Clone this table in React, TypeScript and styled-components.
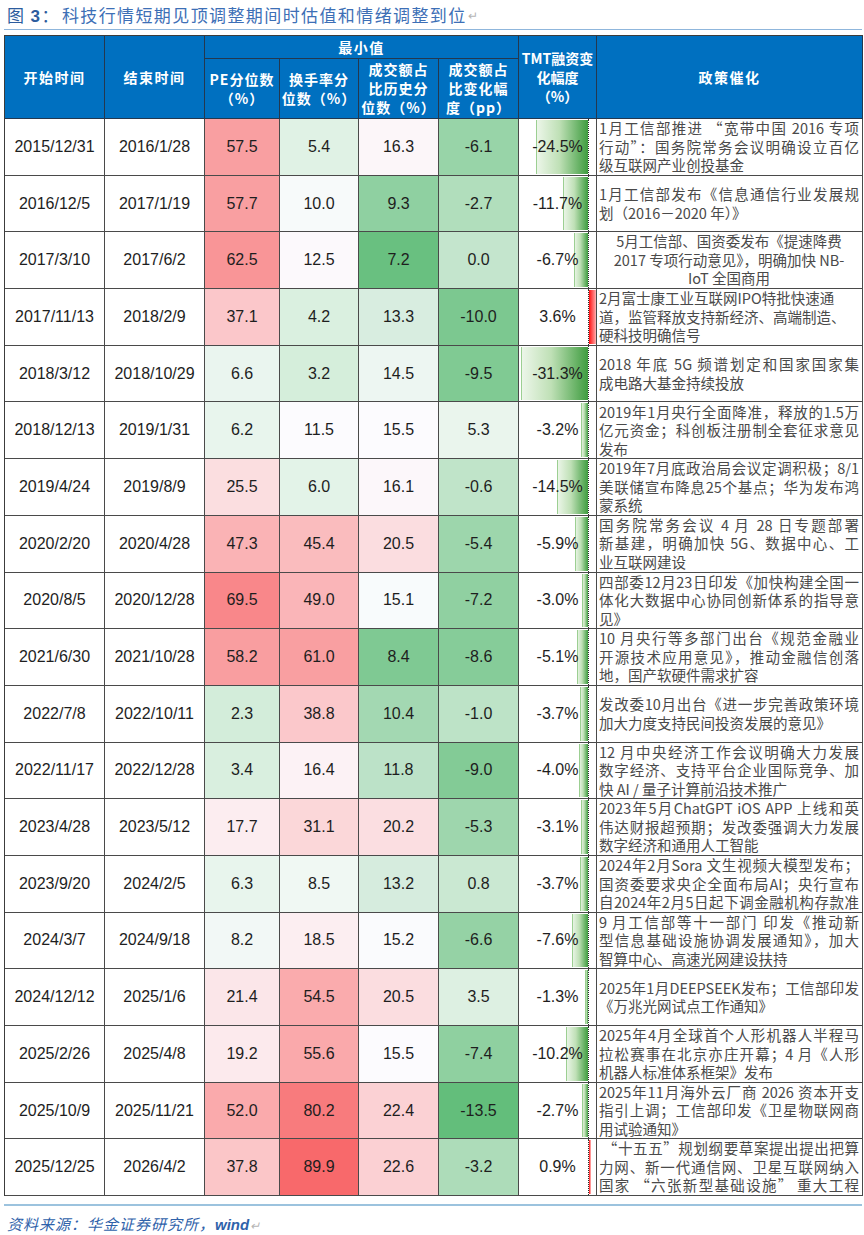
import React, { FC } from 'react';
import styled, { createGlobalStyle } from 'styled-components';

const GlobalStyle = createGlobalStyle`
  html, body {
    margin: 0;
    padding: 0;
    background: #ffffff;
  }
  body {
    font-family: "Liberation Sans", Arial, "Noto Sans CJK SC", sans-serif;
  }
`;

const Page = styled.div`
  width: 864px;
  padding: 0 2px 0 4px;
  box-sizing: border-box;
`;

const Title = styled.div`
  height: 29px;
  display: flex;
  align-items: center;
  padding-left: 3px;
  border-bottom: 1.5px solid #8fb6dc;
  font-family: "Noto Sans CJK SC", sans-serif;
  font-size: 17px;
  letter-spacing: 1.4px;
  color: #3d6fb6;
  white-space: nowrap;
`;

const FigNo = styled.span`
  color: #2c5c9e;
  margin-right: 2px;

  b {
    font-family: "Liberation Sans", Arial, sans-serif;
    font-weight: 700;
  }
`;

const ReturnMark = styled.span`
  color: #b5b5b5;
  font-size: 12px;
  margin-left: 1px;
`;

const Grid = styled.div`
  margin-top: 5px;
  display: grid;
  grid-template-columns: 100px 100px 75px 79px 80px 80px 78px 266px;
  grid-template-rows: 23px 60px;
  grid-auto-rows: 56.7px;
  border-left: 1px solid #3c3c3c;
  border-top: 1px solid #3c3c3c;
  width: max-content;
`;

const HeadCell = styled.div<{ $col: string; $row: string; $spacing?: number }>`
  grid-column: ${(p) => p.$col};
  grid-row: ${(p) => p.$row};
  background: #0070c0;
  color: #ffffff;
  border-right: 1px solid #24384f;
  border-bottom: 1px solid #24384f;
  box-sizing: border-box;
  display: flex;
  align-items: center;
  justify-content: center;
  text-align: center;
  font-family: "Noto Sans CJK SC", sans-serif;
  font-weight: 700;
  font-size: 14px;
  line-height: 19px;
  letter-spacing: ${(p) => p.$spacing ?? 1}px;
  overflow: hidden;
`;

const Cell = styled.div<{ $bg?: string }>`
  background: ${(p) => p.$bg ?? '#ffffff'};
  border-right: 1px solid #4a4a4a;
  border-bottom: 1px solid #4a4a4a;
  box-sizing: border-box;
  display: flex;
  align-items: center;
  justify-content: center;
  font-family: "Liberation Sans", Arial, sans-serif;
  font-size: 16px;
  color: #1e1e1e;
`;

const BarCell = styled(Cell)`
  position: relative;
  overflow: hidden;
`;

const BarValue = styled.span`
  position: relative;
  z-index: 2;
`;

const Bar = styled.div<{ $neg: boolean }>`
  position: absolute;
  top: 1px;
  bottom: 1px;
  z-index: 1;
  background: ${(p) =>
    p.$neg
      ? 'linear-gradient(to right, #eef7eb 0%, #bfe0b6 45%, #3f9d40 100%)'
      : 'linear-gradient(to right, #ff1010 0%, #ff8a8a 70%, #ffd6d6 100%)'};
  box-shadow: ${(p) => (p.$neg ? 'inset 1px 0 0 #9ccf92' : 'none')};
`;

const Axis = styled.div`
  position: absolute;
  top: 0;
  bottom: 0;
  left: 69px;
  width: 0;
  border-left: 1px dotted #2a2a2a;
  z-index: 3;
`;

const PolicyCell = styled(Cell)`
  flex-direction: column;
  align-items: stretch;
  justify-content: center;
  padding: 0 3px 0 2px;
  overflow: hidden;
  font-family: "Noto Sans CJK SC", sans-serif;
  font-size: 14.5px;
  line-height: 18.5px;
  color: #4a4a4a;
`;

const PolicyLine = styled.div<{ $align: 'justify' | 'left' | 'center' }>`
  white-space: nowrap;
  flex-shrink: 0;
  text-align: ${(p) => p.$align};
  text-align-last: ${(p) => p.$align};
`;

const Footer = styled.div`
  margin-top: 8px;
  border-top: 2px solid #9cc3de;
  padding: 7px 0 0 3px;
  font-family: "Noto Sans CJK SC", sans-serif;
  font-style: italic;
  font-size: 15px;
  letter-spacing: 1px;
  color: #2f62aa;

  b {
    font-family: "Liberation Sans", Arial, sans-serif;
    letter-spacing: 0;
  }
`;

type Anchor = [number, string];

const hex = (c: string) => [1, 3, 5].map((i) => parseInt(c.slice(i, i + 2), 16));

const scale = (anchors: Anchor[]) => (v: number) => {
  if (v <= anchors[0][0]) return anchors[0][1];
  for (let i = 1; i < anchors.length; i++) {
    const [v1, c1] = anchors[i];
    if (v <= v1) {
      const [v0, c0] = anchors[i - 1];
      const t = (v - v0) / (v1 - v0);
      const a = hex(c0);
      const b = hex(c1);
      const rgb = a.map((x, k) => Math.round(x + (b[k] - x) * t));
      return `rgb(${rgb.join(',')})`;
    }
  }
  return anchors[anchors.length - 1][1];
};

const peColor = scale([
  [2.3, '#d3edda'],
  [10, '#fcfcff'],
  [85, '#f8696b'],
]);
const turnColor = scale([
  [3.2, '#d5eedb'],
  [11, '#fcfcff'],
  [89.9, '#f8696b'],
]);
const shareColor = scale([
  [7.2, '#69c080'],
  [15.3, '#fcfcff'],
  [22.6, '#fbd0d3'],
]);
const changeColor = scale([
  [-13.5, '#63be7b'],
  [5.3, '#eaf5ed'],
]);

type Align = 'justify' | 'left' | 'center';

interface Row {
  start: string;
  end: string;
  pe: number;
  turn: number;
  share: number;
  change: number;
  tmt: number;
  policy: string[];
  align?: Align;
  fullLast?: boolean;
}

const rows: Row[] = [
  {
    start: '2015/12/31', end: '2016/1/28', pe: 57.5, turn: 5.4, share: 16.3, change: -6.1, tmt: -24.5,
    policy: ['1月工信部推进 “宽带中国 2016 专项', '行动”：国务院常务会议明确设立百亿', '级互联网产业创投基金'],
  },
  {
    start: '2016/12/5', end: '2017/1/19', pe: 57.7, turn: 10.0, share: 9.3, change: -2.7, tmt: -11.7,
    policy: ['1月工信部发布《信息通信行业发展规', '划（2016－2020 年）》'],
  },
  {
    start: '2017/3/10', end: '2017/6/2', pe: 62.5, turn: 12.5, share: 7.2, change: 0.0, tmt: -6.7,
    policy: ['5月工信部、国资委发布《提速降费', '2017 专项行动意见》，明确加快 NB-', 'IoT 全国商用'],
    align: 'center',
  },
  {
    start: '2017/11/13', end: '2018/2/9', pe: 37.1, turn: 4.2, share: 13.3, change: -10.0, tmt: 3.6,
    policy: ['2月富士康工业互联网IPO特批快速通', '道，监管释放支持新经济、高端制造、', '硬科技明确信号'],
    align: 'left',
  },
  {
    start: '2018/3/12', end: '2018/10/29', pe: 6.6, turn: 3.2, share: 14.5, change: -9.5, tmt: -31.3,
    policy: ['2018 年底 5G 频谱划定和国家国家集', '成电路大基金持续投放'],
  },
  {
    start: '2018/12/13', end: '2019/1/31', pe: 6.2, turn: 11.5, share: 15.5, change: 5.3, tmt: -3.2,
    policy: ['2019年1月央行全面降准，释放的1.5万', '亿元资金；科创板注册制全套征求意见', '发布'],
  },
  {
    start: '2019/4/24', end: '2019/8/9', pe: 25.5, turn: 6.0, share: 16.1, change: -0.6, tmt: -14.5,
    policy: ['2019年7月底政治局会议定调积极；8/1', '美联储宣布降息25个基点；华为发布鸿', '蒙系统'],
  },
  {
    start: '2020/2/20', end: '2020/4/28', pe: 47.3, turn: 45.4, share: 20.5, change: -5.4, tmt: -5.9,
    policy: ['国务院常务会议 4 月 28 日专题部署', '新基建，明确加快 5G、数据中心、工', '业互联网建设'],
  },
  {
    start: '2020/8/5', end: '2020/12/28', pe: 69.5, turn: 49.0, share: 15.1, change: -7.2, tmt: -3.0,
    policy: ['四部委12月23日印发《加快构建全国一', '体化大数据中心协同创新体系的指导意', '见》'],
  },
  {
    start: '2021/6/30', end: '2021/10/28', pe: 58.2, turn: 61.0, share: 8.4, change: -8.6, tmt: -5.1,
    policy: ['10 月央行等多部门出台《规范金融业', '开源技术应用意见》，推动金融信创落', '地，国产软硬件需求扩容'],
  },
  {
    start: '2022/7/8', end: '2022/10/11', pe: 2.3, turn: 38.8, share: 10.4, change: -1.0, tmt: -3.7,
    policy: ['发改委10月出台《进一步完善政策环境', '加大力度支持民间投资发展的意见》'],
  },
  {
    start: '2022/11/17', end: '2022/12/28', pe: 3.4, turn: 16.4, share: 11.8, change: -9.0, tmt: -4.0,
    policy: ['12 月中央经济工作会议明确大力发展', '数字经济、支持平台企业国际竞争、加', '快 AI / 量子计算前沿技术推广'],
  },
  {
    start: '2023/4/28', end: '2023/5/12', pe: 17.7, turn: 31.1, share: 20.2, change: -5.3, tmt: -3.1,
    policy: ['2023年5月ChatGPT iOS APP 上线和英', '伟达财报超预期；发改委强调大力发展', '数字经济和通用人工智能'],
  },
  {
    start: '2023/9/20', end: '2024/2/5', pe: 6.3, turn: 8.5, share: 13.2, change: 0.8, tmt: -3.7,
    policy: ['2024年2月Sora 文生视频大模型发布；', '国资委要求央企全面布局AI；央行宣布', '自2024年2月5日起下调金融机构存款准'],
    fullLast: true,
  },
  {
    start: '2024/3/7', end: '2024/9/18', pe: 8.2, turn: 18.5, share: 15.2, change: -6.6, tmt: -7.6,
    policy: ['9 月工信部等十一部门 印发《推动新', '型信息基础设施协调发展通知》，加大', '智算中心、高速光网建设扶持'],
  },
  {
    start: '2024/12/12', end: '2025/1/6', pe: 21.4, turn: 54.5, share: 20.5, change: 3.5, tmt: -1.3,
    policy: ['2025年1月DEEPSEEK发布；工信部印发', '《万兆光网试点工作通知》'],
  },
  {
    start: '2025/2/26', end: '2025/4/8', pe: 19.2, turn: 55.6, share: 15.5, change: -7.4, tmt: -10.2,
    policy: ['2025年4月全球首个人形机器人半程马', '拉松赛事在北京亦庄开幕；4 月《人形', '机器人标准体系框架》发布'],
  },
  {
    start: '2025/10/9', end: '2025/11/21', pe: 52.0, turn: 80.2, share: 22.4, change: -13.5, tmt: -2.7,
    policy: ['2025年11月海外云厂商 2026 资本开支', '指引上调；工信部印发《卫星物联网商', '用试验通知》'],
  },
  {
    start: '2025/12/25', end: '2026/4/2', pe: 37.8, turn: 89.9, share: 22.6, change: -3.2, tmt: 0.9,
    policy: ['\u00a0“十五五”规划纲要草案提出提出把算', '力网、新一代通信网、卫星互联网纳入', '国家 “六张新型基础设施” 重大工程'],
    fullLast: true,
  },
];

const AXIS = 69;
const NEG_PX = 67 / 31.3;
const POS_PX = 8 / 3.6;

const TmtBar: FC<{ value: number }> = ({ value }) => {
  const neg = value < 0;
  const w = neg ? -value * NEG_PX : value * POS_PX;
  const style = neg ? { left: AXIS - w, width: w } : { left: AXIS + 1, width: w };
  return (
    <BarCell>
      <Bar $neg={neg} style={style} />
      <Axis />
      <BarValue>{value.toFixed(1)}%</BarValue>
    </BarCell>
  );
};

const Policy: FC<{ row: Row }> = ({ row }) => {
  const align = row.align ?? 'justify';
  return (
    <PolicyCell>
      {row.policy.map((line, i) => {
        const last = i === row.policy.length - 1;
        const a: Align = align === 'justify' && last && !row.fullLast ? 'left' : align;
        return (
          <PolicyLine key={i} $align={a}>
            {line}
          </PolicyLine>
        );
      })}
    </PolicyCell>
  );
};

const App: FC = () => {
  return (
    <Page>
      <GlobalStyle />
      <Title>
        <FigNo>
          图 <b>3</b>：
        </FigNo>
        科技行情短期见顶调整期间时估值和情绪调整到位
        <ReturnMark>↵</ReturnMark>
      </Title>

      <Grid>
        <HeadCell $col="1" $row="1 / 3" $spacing={1.5}>开始时间</HeadCell>
        <HeadCell $col="2" $row="1 / 3" $spacing={1.5}>结束时间</HeadCell>
        <HeadCell $col="3 / 7" $row="1" $spacing={1.5}>最小值</HeadCell>
        <HeadCell $col="7" $row="1 / 3" $spacing={0}>
          TMT融资变
          <br />
          化幅度
          <br />
          （%）
        </HeadCell>
        <HeadCell $col="8" $row="1 / 3" $spacing={1.5}>政策催化</HeadCell>
        <HeadCell $col="3" $row="2">
          PE分位数
          <br />
          （%）
        </HeadCell>
        <HeadCell $col="4" $row="2">
          换手率分
          <br />
          位数（%）
        </HeadCell>
        <HeadCell $col="5" $row="2">
          成交额占
          <br />
          比历史分
          <br />
          位数（%）
        </HeadCell>
        <HeadCell $col="6" $row="2">
          成交额占
          <br />
          比变化幅
          <br />
          度（pp）
        </HeadCell>

        {rows.map((r) => (
          <React.Fragment key={r.start}>
            <Cell>{r.start}</Cell>
            <Cell>{r.end}</Cell>
            <Cell $bg={peColor(r.pe)}>{r.pe.toFixed(1)}</Cell>
            <Cell $bg={turnColor(r.turn)}>{r.turn.toFixed(1)}</Cell>
            <Cell $bg={shareColor(r.share)}>{r.share.toFixed(1)}</Cell>
            <Cell $bg={changeColor(r.change)}>{r.change.toFixed(1)}</Cell>
            <TmtBar value={r.tmt} />
            <Policy row={r} />
          </React.Fragment>
        ))}
      </Grid>

      <Footer>
        资料来源：华金证券研究所，<b>wind</b>
        <ReturnMark>↵</ReturnMark>
      </Footer>
    </Page>
  );
};

export default App;
